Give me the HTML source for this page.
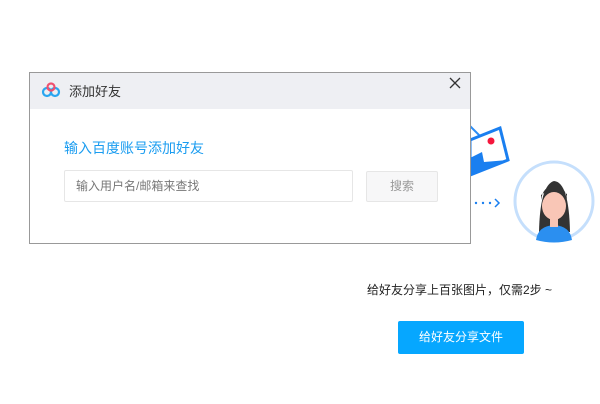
<!DOCTYPE html>
<html><head><meta charset="utf-8"><style>
body{margin:0;width:600px;height:404px;background:#fff;position:relative;overflow:hidden;font-family:"Liberation Sans","Noto Sans CJK SC",sans-serif}
.a{position:absolute}
</style></head><body>
<svg class="a" style="left:460px;top:110px" width="140" height="140" viewBox="460 110 140 140">
<path d="M470 126 L482 138" stroke="#2b8df5" stroke-width="2"/>
<path d="M470 140 L500 128 L508 160 L470 175 Z" fill="#fff" stroke="#1a7ff0" stroke-width="3"/>
<path d="M470 158 L482 152 L484 162 L508 160 L470 176 Z" fill="#1a7ff0"/>
<circle cx="491" cy="141" r="3.5" fill="#f5163c"/>
<circle cx="476" cy="203" r="1.2" fill="#1a7ff0"/><circle cx="483" cy="203" r="1.2" fill="#1a7ff0"/><circle cx="490" cy="203" r="1.2" fill="#1a7ff0"/>
<path d="M495 199 L499 203 L495 207" fill="none" stroke="#1a7ff0" stroke-width="1.5"/>
<circle cx="554" cy="201" r="39" fill="#fff" stroke="#c5dffc" stroke-width="3"/>
<path d="M539 232 Q540 185 554 181 Q569 182 570 232 Z" fill="#333"/>
<path d="M536 240 Q538 226 554 225 Q570 226 572 240 Q554 245 536 240Z" fill="#2b8ff0"/>
<rect x="550" y="215" width="8" height="12" fill="#f8c4b4"/>
<ellipse cx="554" cy="206" rx="12" ry="14" fill="#f9c6b6"/>
<path d="M541 200 Q543 186 554 186 Q566 186 567 200 L567 194 Q560 190 554 190 Q548 190 541 195 Z" fill="#333"/>
</svg>
<div class="a" style="left:29px;top:72px;width:440px;height:170px;border:1px solid #999;background:#fff">
<div style="height:36px;background:#eeeff3;position:relative">
<svg class="a" style="left:11px;top:9px" width="20" height="16" viewBox="0 0 20 16"><circle cx="6" cy="10" r="4" fill="none" stroke="#2aa6f0" stroke-width="2.2"/><circle cx="14" cy="10" r="4" fill="none" stroke="#2aa6f0" stroke-width="2.2"/><circle cx="10" cy="5" r="3.5" fill="none" stroke="#f0506e" stroke-width="2.2"/></svg>
<span class="a" style="left:39px;top:8px;font-size:13px;color:#333">添加好友</span>
<svg class="a" style="left:419px;top:4px" width="12" height="12" viewBox="0 0 12 12"><path d="M1 1L11 11M11 1L1 11" stroke="#333" stroke-width="1.3"/></svg>
</div>
<div class="a" style="left:34px;top:65px;font-size:14px;color:#1a9cf0">输入百度账号添加好友</div>
<div class="a" style="left:34px;top:97px;width:287px;height:30px;border:1px solid #e6e6e6;border-radius:2px;font-size:12px;color:#777;line-height:30px;text-indent:11px">输入用户名/邮箱来查找</div>
<div class="a" style="left:336px;top:98px;width:70px;height:29px;border:1px solid #e6e6e6;background:#f7f7f8;border-radius:2px;font-size:12px;color:#999;line-height:29px;text-align:center">搜索</div>
</div>
<div class="a" style="left:367px;top:281px;font-size:12px;color:#222">给好友分享上百张图片，仅需2步 ~</div>
<div class="a" style="left:398px;top:321px;width:126px;height:33px;background:#06a7ff;color:#fff;font-size:12px;line-height:33px;text-align:center;border-radius:2px">给好友分享文件</div>
</body></html>
